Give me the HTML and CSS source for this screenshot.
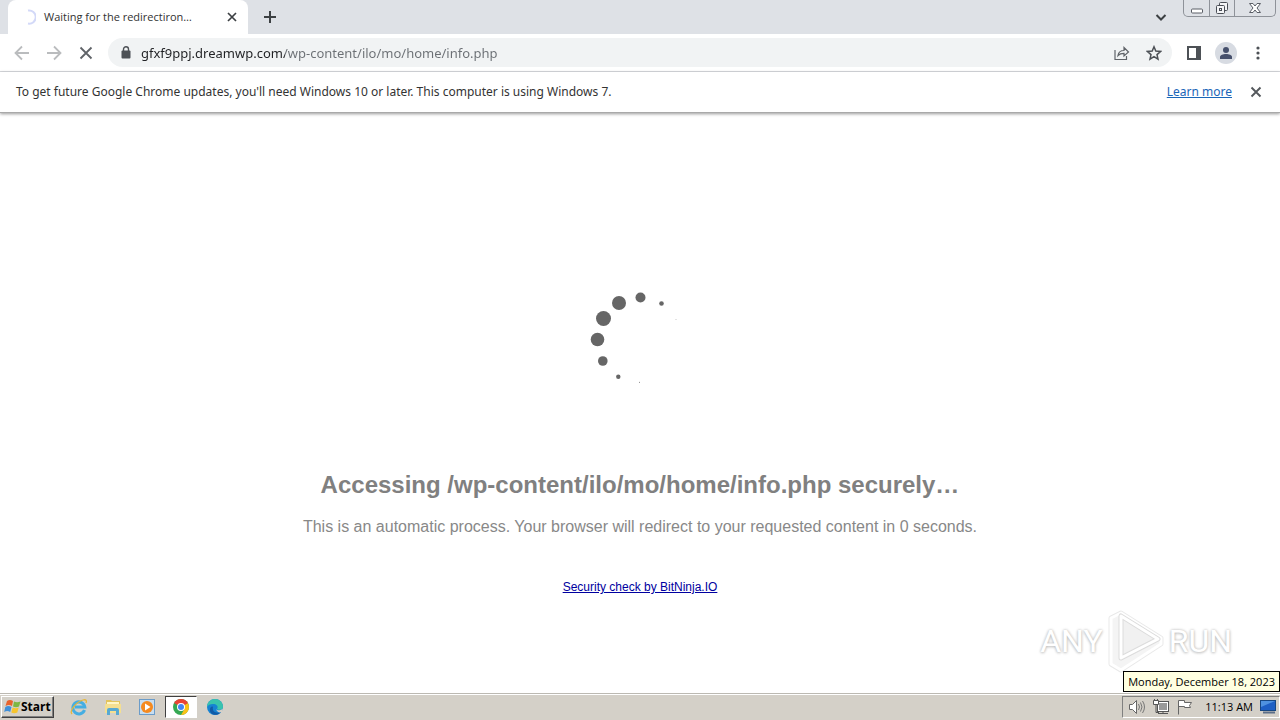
FILE: index.html
```html
<!DOCTYPE html>
<html lang="en">
<head>
    <meta charset="UTF-8">
    <meta name="viewport" content="width=device-width, initial-scale=1.0">
    <title>Waiting for the redirectiron...</title>
    <link rel="stylesheet" href="styles.css">
</head>
<body>

<!-- Tab strip -->
<header class="tab-strip">
    <div class="tab">
        <svg class="tab-spinner" width="16" height="16" viewBox="0 0 16 16"><path d="M8 1.600A6.600 6.600 0 1 1 8 14.600" fill="none" stroke="#d3d9f8" stroke-width="2"/></svg>
        <span class="tab-title">Waiting for the redirectiron…</span>
        <button class="icon-btn tab-close" aria-label="Close tab">
            <svg width="10" height="10" viewBox="0 0 10 10"><path d="M1 1l8 8M9 1L1 9" stroke="#3c4043" stroke-width="1.700"/></svg>
        </button>
    </div>
    <button class="icon-btn new-tab" aria-label="New tab">
        <svg width="14" height="14" viewBox="0 0 14 14"><path d="M7 1v12M1 7h12" stroke="#3c4043" stroke-width="2"/></svg>
    </button>
    <button class="icon-btn tab-search" aria-label="Search tabs">
        <svg width="12" height="12" viewBox="0 0 12 12"><path d="M1.500 4L6 8.500 10.500 4" fill="none" stroke="#3c4043" stroke-width="2"/></svg>
    </button>
    <div class="window-controls">
        <button class="window-btn" aria-label="Minimize">
            <svg width="14" height="14" viewBox="0 0 14 14"><rect x="1.500" y="8" width="11" height="4" rx="1" fill="#fff" stroke="#5a5e66"/></svg>
        </button>
        <button class="window-btn" aria-label="Restore">
            <svg width="14" height="14" viewBox="0 0 14 14"><g fill="#f4f5f7" stroke="#4a4e56"><rect x="4.500" y="1.500" width="8" height="8" rx="1"/><rect x="1.500" y="4.500" width="8" height="8" rx="1"/><rect x="4.500" y="7.500" width="2" height="2"/></g></svg>
        </button>
        <button class="window-btn window-close" aria-label="Close">
            <svg width="14" height="14" viewBox="0 0 14 14"><path d="M1.500 2.500h3.500l2 2.500 2-2.500h3.500L9 7l3.500 4.500H9L7 9l-2 2.500H1.500L5 7z" fill="#fff" stroke="#5a5e66"/></svg>
        </button>
    </div>
</header>

<!-- Toolbar -->
<nav class="toolbar">
    <button class="icon-btn nav-btn" aria-label="Back">
        <svg width="16" height="16" viewBox="0 0 16 16"><path d="M15 8H2M8 1.500L1.500 8 8 14.500" fill="none" stroke="#babcbe" stroke-width="1.800"/></svg>
    </button>
    <button class="icon-btn nav-btn" aria-label="Forward">
        <svg width="16" height="16" viewBox="0 0 16 16"><path d="M1 8h13M8 1.500L14.500 8 8 14.500" fill="none" stroke="#babcbe" stroke-width="1.800"/></svg>
    </button>
    <button class="icon-btn nav-btn" aria-label="Stop">
        <svg width="14" height="14" viewBox="0 0 14 14"><path d="M1.500 1.500l11 11M12.500 1.500l-11 11" stroke="#5f6368" stroke-width="1.800"/></svg>
    </button>
    <div class="address-bar">
        <svg width="10" height="13" viewBox="0 0 10 13"><rect x="0.500" y="4.500" width="9" height="8" rx="1" fill="#4d5156"/><path d="M2.500 5V3.300a2.500 2.500 0 0 1 5 0V5" fill="none" stroke="#4d5156" stroke-width="1.400"/></svg>
        <input class="address" type="text" aria-label="Address" value="gfxf9ppj.dreamwp.com/wp-content/ilo/mo/home/info.php">
        <button class="icon-btn" aria-label="Share">
            <svg width="16" height="16" viewBox="0 0 16 16"><path d="M1 5v9.500h11.500V11M4 10.500C4.500 7 7 5.500 10 5.500V2.500L14.500 7 10 11V8.300C7.500 8.300 5.500 8.800 4 10.500z" fill="none" stroke="#5f6368" stroke-width="1.200"/></svg>
        </button>
        <button class="icon-btn" aria-label="Bookmark this tab">
            <svg width="16" height="16" viewBox="0 0 16 16"><path d="M8 1.800l1.800 4.300 4.700.400-3.500 3.100 1 4.600L8 11.700l-4 2.500 1-4.600L1.500 6.500l4.700-.400z" fill="none" stroke="#4d5156" stroke-width="1.500"/></svg>
        </button>
    </div>
    <button class="icon-btn" aria-label="Side panel">
        <svg width="16" height="16" viewBox="0 0 16 16"><path d="M1 1h14v14H1zM3 3v10h7V3z" fill="#4d5156" fill-rule="evenodd"/></svg>
    </button>
    <button class="icon-btn profile" aria-label="Profile">
        <svg width="14" height="14" viewBox="0 0 14 14"><circle cx="7" cy="4" r="3" fill="#46506c"/><path d="M1 13v-2c0-2 3-3 6-3s6 1 6 3v2z" fill="#46506c"/></svg>
    </button>
    <button class="icon-btn" aria-label="Menu">
        <svg width="16" height="16" viewBox="0 0 16 16"><g fill="#4d5156"><circle cx="8" cy="3" r="1.600"/><circle cx="8" cy="8" r="1.600"/><circle cx="8" cy="13" r="1.600"/></g></svg>
    </button>
</nav>

<!-- Info bar -->
<div class="info-bar">
    <p class="info-text">To get future Google Chrome updates, you'll need Windows 10 or later. This computer is using Windows 7.</p>
    <a class="learn-more" href="#">Learn more</a>
    <button class="icon-btn" aria-label="Dismiss">
        <svg width="12" height="12" viewBox="0 0 12 12"><path d="M1.500 1.500l9 9M10.500 1.500l-9 9" stroke="#54585c" stroke-width="1.900"/></svg>
    </button>
</div>

<!-- Page content -->
<main class="page">
    <svg class="spinner" width="100" height="100" viewBox="0 0 100 100">
        <g fill="#666">
            <circle cx="50.500" cy="7.500" r="5"/>
            <circle cx="29" cy="13" r="7"/>
            <circle cx="13.500" cy="28.500" r="7.500"/>
            <circle cx="7.500" cy="49.500" r="6.800"/>
            <circle cx="12.800" cy="71" r="4.800"/>
            <circle cx="28.300" cy="86.700" r="2.200"/>
            <circle cx="49.500" cy="92.300" r="0.500"/>
            <circle cx="71.500" cy="13.500" r="2.300"/>
            <circle cx="86" cy="29.300" r="0.400"/>
        </g>
    </svg>
    <h1>Accessing /wp-content/ilo/mo/home/info.php securely…</h1>
    <p class="message">This is an automatic process. Your browser will redirect to your requested content in 0 seconds.</p>
    <a class="security-link" href="#">Security check by BitNinja.IO</a>

    <div class="watermark">
        <span>ANY</span>
        <svg width="58" height="64" viewBox="0 0 58 64">
            <g fill="none" stroke-linejoin="round">
                <path d="M4 9v46l10 6 40-26v-6L14 4z" stroke="#e9e9e9" stroke-width="5"/>
                <path d="M4 9v46l10 6 40-26v-6L14 4z" fill="#f4f4f4" stroke="#fff" stroke-width="3"/>
                <path d="M14 7v42l37-19z" fill="#f1f1f1" stroke="#dcdcdc" stroke-width="5"/>
                <path d="M14 7v42l37-19z" stroke="#fff" stroke-width="3"/>
            </g>
        </svg>
        <span>RUN</span>
    </div>
</main>

<!-- Taskbar -->
<footer class="taskbar">
    <button class="start-btn">
        <svg width="17" height="16" viewBox="0 0 17 16"><path d="M3 2c2-1.500 4-1.300 6 0L8 7C6 5.800 4 5.700 1.500 7z" fill="#e8622b"/><path d="M10 2.500c2 1 4 1 6.500 0L15 7.500c-2 1-4 1-6 0z" fill="#7db743"/><path d="M1.300 8c2-1.300 4-1.200 6.200 0l-1.300 5c-2-1.200-4-1.200-6 0z" fill="#3f8fd8"/><path d="M8.700 8.500c2 1 4 1 6 0l-1.400 5c-2 1-4 1-6 0z" fill="#f7c52d"/></svg>
        Start
    </button>
    <div class="quick-launch">
        <button class="task-btn" aria-label="Internet Explorer">
            <svg width="18" height="18" viewBox="0 0 18 18"><path d="M14.500 12a6 6 0 1 1 .300-3H5" fill="none" stroke="#45aee2" stroke-width="3"/><path d="M2 16C-1 13 6 4 13 2c3-.800 4 .500 3 3" fill="none" stroke="#e5b63b" stroke-width="1.300"/></svg>
        </button>
        <button class="task-btn" aria-label="Windows Explorer">
            <svg width="18" height="18" viewBox="0 0 18 18"><path d="M2 2h5l1 1h8v12H2z" fill="#e3c45c"/><path d="M3 4h12v3H3z" fill="#fff6c6"/><path d="M1 6h16v9H1z" fill="#f4df91"/><path d="M3 17v-5q0-2 2-2h8q2 0 2 2v5h-3v-4H6v4z" fill="#58a9d2"/></svg>
        </button>
        <button class="task-btn" aria-label="Media Player">
            <svg width="18" height="18" viewBox="0 0 18 18"><rect x="1.500" y="1.500" width="15" height="15" fill="#c8def0" stroke="#6b9cc9"/><circle cx="9" cy="9" r="6" fill="#f58a1f"/><path d="M7 5.500v7L12.500 9z" fill="#fff"/></svg>
        </button>
        <button class="task-btn active" aria-label="Google Chrome">
            <svg width="16" height="16" viewBox="0 0 16 16"><circle cx="8" cy="8" r="8" fill="#35a853"/><path d="M8 8L1.100 4A8 8 0 0 1 14.900 4z" fill="#ea4335"/><path d="M8 8l6.900-4A8 8 0 0 1 8 16l3.500-6z" fill="#fbc116"/><path d="M8 4h6.900L8 8z" fill="#ea4335"/><circle cx="8" cy="8" r="4" fill="#fff"/><circle cx="8" cy="8" r="3" fill="#4285f4"/></svg>
        </button>
        <button class="task-btn" aria-label="Microsoft Edge">
            <svg width="16" height="16" viewBox="0 0 16 16"><circle cx="8" cy="8" r="8" fill="#1683d2"/><path d="M0 8a8 8 0 0 1 16 0c0 3-5 3.500-6 2 2-3-1-5-4-5C3 5 1 6 0 8z" fill="#39c3ad"/><path d="M6 8c-1 4 2 7 8 5-4 5-12 3-11-3 .300-2 2-3 3-2z" fill="#125ba7"/><path d="M9 10c1 2 5 1.500 7-.500L15 13c-3 1-5 0-6-3z" fill="#d5d0c8"/></svg>
        </button>
    </div>
    <div class="tray">
        <svg width="18" height="16" viewBox="0 0 18 16"><path d="M1.500 5.500h3l4-4v13l-4-4h-3z" fill="#fff" stroke="#666"/><path d="M10.500 5q2 3 0 6M12.500 3.500q3 4.500 0 9M14.500 2q4 6 0 12" fill="none" stroke="#777"/></svg>
        <svg width="16" height="16" viewBox="0 0 16 16"><rect x="5.500" y="3.500" width="9" height="8" fill="#999" stroke="#fff"/><rect x="4.500" y="2.500" width="11" height="10" fill="none" stroke="#555"/><path d="M5 14.500h10M10 12v2" stroke="#555"/><path d="M0.500 1.500h5v4h-5z" fill="#fff" stroke="#555"/><path d="M1.500 0v2M4.500 0v2M3 5.500v8h3" fill="none" stroke="#555"/></svg>
        <svg width="18" height="16" viewBox="0 0 18 16"><path d="M2.500 15.500v-14h6v2h7l-2 3 1 2h-6v-1h-6" fill="#fff" stroke="#666"/></svg>
        <time class="clock">11:13 AM
            <span class="date-tip">Monday, December 18, 2023</span>
        </time>
        <svg width="16" height="14" viewBox="0 0 16 14"><rect x="0.500" y="0.500" width="15" height="10" fill="#1e5fc4" stroke="#174782"/><path d="M1 1h14L1 7z" fill="#4f92e0"/><path d="M3 12.500h12" stroke="#5c6f88" stroke-width="2"/></svg>
    </div>
</footer>

</body>
</html>
```
FILE: styles.css
```css
/* General Styling */
* {
    box-sizing: border-box;
    margin: 0;
    padding: 0;
}

body {
    min-height: 100vh;
    display: flex;
    flex-direction: column;
    background: white;
    font-family: "Noto Sans", Tahoma, sans-serif;
    font-size: 12px;
    color: #333;
}

button {
    border: none;
    background: none;
    font-family: inherit;
    cursor: pointer;
}

svg {
    display: block;
    flex-shrink: 0;
}

.icon-btn {
    width: 16px;
    height: 16px;
    display: flex;
    align-items: center;
    justify-content: center;
    flex-shrink: 0;
}

/* Tab strip */
.tab-strip {
    height: 34px;
    padding-left: 8px;
    display: flex;
    align-items: center;
    background: #dee1e6;
}

.tab {
    width: 240px;
    height: 34px;
    padding: 0 8px 0 12px;
    display: flex;
    align-items: center;
    gap: 8px;
    background: white;
    border-radius: 8px 8px 0 0;
}

.tab-title {
    flex: 1;
    padding-bottom: 2px;
    font-family: "Open Sans", Tahoma, sans-serif;
    font-size: 11px;
    white-space: nowrap;
}

.new-tab {
    margin-left: 14px;
}

.tab-search {
    margin-left: auto;
    margin-right: 14px;
}

.window-controls {
    display: flex;
    align-self: flex-start;
    margin-right: 4px;
    border: 1px solid #8e9299;
    border-top: none;
    border-radius: 0 0 5px 5px;
}

.window-btn {
    width: 25px;
    height: 16px;
    display: flex;
    align-items: center;
    justify-content: center;
}

.window-btn + .window-btn {
    border-left: 1px solid #8e9299;
}

.window-close {
    width: 41px;
}

/* Toolbar */
.toolbar {
    height: 38px;
    padding: 0 14px;
    display: flex;
    align-items: center;
    gap: 16px;
    border-bottom: 1px solid #dadce0;
}

.address-bar {
    flex: 1;
    height: 29px;
    padding: 0 10px 0 13px;
    margin: 0 -2px;
    display: flex;
    align-items: center;
    gap: 16px;
    background: #f1f3f4;
    border-radius: 15px;
}

/* host name is dark, the rest of the path is grey */
.address {
    flex: 1;
    min-width: 0;
    margin-left: -6px;
    border: none;
    outline: none;
    font-family: inherit;
    font-size: 13px;
    color: transparent;
    background: linear-gradient(to right, #202124 144px, #6b6f74 144px);
    -webkit-background-clip: text;
    background-clip: text;
}

.profile {
    width: 22px;
    height: 22px;
    margin: 0 -3px;
    border-radius: 50%;
    background: #d7dbe2;
}

/* Info bar */
.info-bar {
    height: 41px;
    padding: 0 16px;
    display: flex;
    align-items: center;
    gap: 16px;
    border-bottom: 1px solid #a9a9a9;
    box-shadow: 0 1px 3px rgba(0, 0, 0, 0.4);
}

.info-text,
.learn-more {
    padding-bottom: 2px;
    font-size: 12px;
}

.info-text {
    flex: 1;
}

.learn-more {
    color: #1a66b8;
}

/* Page content */
.page {
    position: relative;
    flex: 1;
    padding: 177px 16px 0;
    display: flex;
    flex-direction: column;
    align-items: center;
    font-family: "Liberation Sans", Arial, sans-serif;
    text-align: center;
    color: #808080;
}

h1 {
    margin-top: 81px;
    font-size: 24px;
    line-height: 28px;
}

.message {
    margin-top: 18px;
    font-size: 16px;
    line-height: 20px;
    color: #888;
}

.security-link {
    margin-top: 42px;
    font-size: 12px;
    line-height: 16px;
    color: #0000a0;
}

.watermark {
    position: absolute;
    right: 48px;
    bottom: 20px;
    display: flex;
    align-items: center;
    gap: 4px;
    font-family: Roboto, sans-serif;
    font-size: 32px;
    color: white;
    text-shadow: 0 0 3px #bbb, 0 1px 3px #ccc;
}

/* Taskbar */
.taskbar {
    height: 27px;
    padding: 1px 0 2px 1px;
    display: flex;
    align-items: center;
    background: #d4d0c8;
    border-top: 1px solid #bcb9b2;
    box-shadow: inset 0 1px 0 white;
}

.start-btn {
    width: 53px;
    height: 22px;
    padding-left: 2px;
    display: flex;
    align-items: center;
    border: 1px solid;
    border-color: white #404040 #404040 white;
    box-shadow: inset -1px -1px 0 #808080;
    font-family: "Open Sans", Tahoma, sans-serif;
    font-size: 12px;
    font-weight: bold;
    color: black;
}

.quick-launch {
    display: flex;
    gap: 2px;
    margin-left: 9px;
}

.task-btn {
    width: 32px;
    height: 22px;
    display: flex;
    align-items: center;
    justify-content: center;
}

.task-btn.active {
    background: white;
    border: 1px solid;
    border-color: #404040 white white #404040;
}

.tray {
    height: 22px;
    margin-left: auto;
    padding: 0 3px 0 5px;
    display: flex;
    align-items: center;
    gap: 7px;
    border: 1px solid;
    border-color: #808080 white white #808080;
}

.clock {
    position: relative;
    margin-left: 4px;
    font-family: "Open Sans", Tahoma, sans-serif;
    font-size: 11px;
    color: black;
}

.date-tip {
    position: absolute;
    right: -27px;
    bottom: 22px;
    padding: 2px 4px;
    white-space: nowrap;
    line-height: 15px;
    background: #ffffe1;
    border: 1px solid black;
}
```
